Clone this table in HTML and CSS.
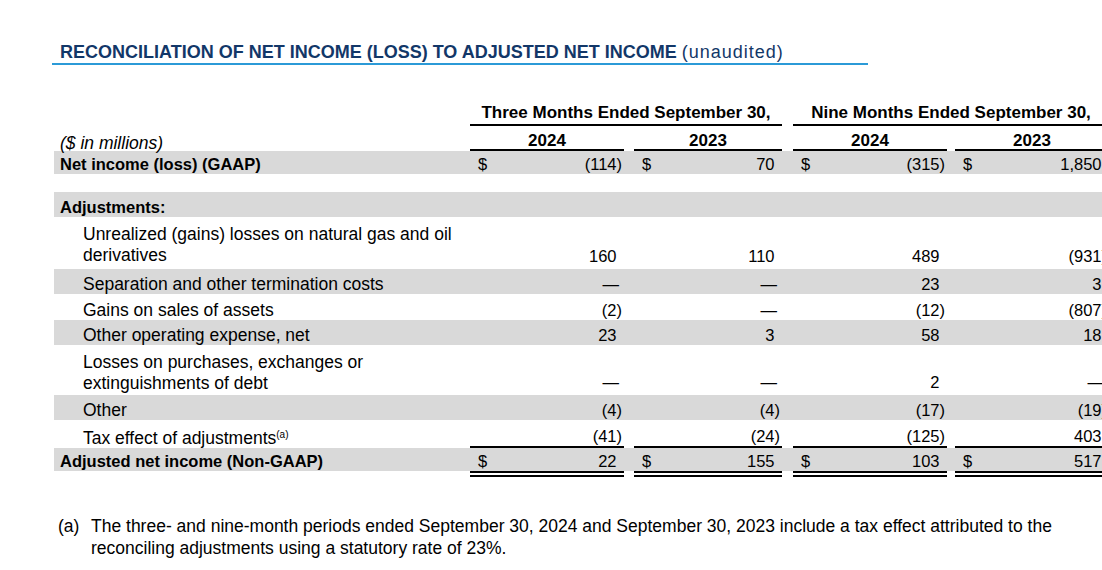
FILE: index.html
```html
<!DOCTYPE html>
<html lang="en">
<head>
<meta charset="utf-8">
<title>Reconciliation of Net Income (Loss) to Adjusted Net Income</title>
<link rel="stylesheet" href="styles.css">
</head>
<body>
<div class="page">
  <h1 class="title"><span class="title-main">RECONCILIATION OF NET INCOME (LOSS) TO ADJUSTED NET INCOME</span> <span class="title-sub">(unaudited)</span></h1>

  <table class="recon">
    <colgroup>
      <col class="c-label">
      <col class="c-val">
      <col class="c-sp1">
      <col class="c-val2">
      <col class="c-sp2">
      <col class="c-val">
      <col class="c-sp3">
      <col class="c-val4">
    </colgroup>
    <thead>
      <tr class="h1">
        <th></th>
        <th colspan="3" class="period">Three Months Ended September 30,</th>
        <th></th>
        <th colspan="3" class="period">Nine Months Ended September 30,</th>
      </tr>
      <tr class="h2">
        <th class="units">($ in millions)</th>
        <th class="yr">2024</th>
        <th></th>
        <th class="yr">2023</th>
        <th></th>
        <th class="yr">2024</th>
        <th></th>
        <th class="yr">2023</th>
      </tr>
    </thead>
    <tbody>
      <tr class="shade r23">
        <td class="lbl b">Net income (loss) (GAAP)</td>
        <td class="num"><div class="money"><span>$</span><span>(114)</span></div></td>
        <td></td>
        <td class="num"><div class="money"><span>$</span><span class="p">70</span></div></td>
        <td></td>
        <td class="num"><div class="money"><span>$</span><span>(315)</span></div></td>
        <td></td>
        <td class="num"><div class="money"><span>$</span><span class="p">1,850</span></div></td>
      </tr>
      <tr class="gap"><td colspan="8"></td></tr>
      <tr class="shade r25">
        <td class="lbl b">Adjustments:</td>
        <td></td><td></td><td></td><td></td><td></td><td></td><td></td>
      </tr>
      <tr class="two r52">
        <td class="lbl sub">Unrealized (gains) losses on natural gas and oil<br>derivatives</td>
        <td class="num"><span class="p">160</span></td>
        <td></td>
        <td class="num"><span class="p">110</span></td>
        <td></td>
        <td class="num"><span class="p">489</span></td>
        <td></td>
        <td class="num"><span>(931)</span></td>
      </tr>
      <tr class="shade r25">
        <td class="lbl sub">Separation and other termination costs</td>
        <td class="num"><span class="dash">—</span></td>
        <td></td>
        <td class="num"><span class="dash">—</span></td>
        <td></td>
        <td class="num"><span class="p">23</span></td>
        <td></td>
        <td class="num"><span class="p">3</span></td>
      </tr>
      <tr class="r26">
        <td class="lbl sub">Gains on sales of assets</td>
        <td class="num"><span>(2)</span></td>
        <td></td>
        <td class="num"><span class="dash">—</span></td>
        <td></td>
        <td class="num"><span>(12)</span></td>
        <td></td>
        <td class="num"><span>(807)</span></td>
      </tr>
      <tr class="shade r25">
        <td class="lbl sub">Other operating expense, net</td>
        <td class="num"><span class="p">23</span></td>
        <td></td>
        <td class="num"><span class="p">3</span></td>
        <td></td>
        <td class="num"><span class="p">58</span></td>
        <td></td>
        <td class="num"><span class="p">18</span></td>
      </tr>
      <tr class="two r50">
        <td class="lbl sub low">Losses on purchases, exchanges or<br>extinguishments of debt</td>
        <td class="num"><span class="dash">—</span></td>
        <td></td>
        <td class="num"><span class="dash">—</span></td>
        <td></td>
        <td class="num"><span class="p">2</span></td>
        <td></td>
        <td class="num"><span class="dash">—</span></td>
      </tr>
      <tr class="shade r25">
        <td class="lbl sub">Other</td>
        <td class="num"><span>(4)</span></td>
        <td></td>
        <td class="num"><span>(4)</span></td>
        <td></td>
        <td class="num"><span>(17)</span></td>
        <td></td>
        <td class="num"><span>(19)</span></td>
      </tr>
      <tr class="sub-total r28">
        <td class="lbl sub">Tax effect of adjustments<sup class="fn">(a)</sup></td>
        <td class="num"><span>(41)</span></td>
        <td></td>
        <td class="num"><span>(24)</span></td>
        <td></td>
        <td class="num"><span>(125)</span></td>
        <td></td>
        <td class="num"><span class="p">403</span></td>
      </tr>
      <tr class="shade total r29">
        <td class="lbl b">Adjusted net income (Non-GAAP)</td>
        <td class="num"><div class="money"><span>$</span><span class="p">22</span></div></td>
        <td></td>
        <td class="num"><div class="money"><span>$</span><span class="p">155</span></div></td>
        <td></td>
        <td class="num"><div class="money"><span>$</span><span class="p">103</span></div></td>
        <td></td>
        <td class="num"><div class="money"><span>$</span><span class="p">517</span></div></td>
      </tr>
    </tbody>
  </table>

  <div class="note">
    <span class="note-mark">(a)</span>
    <p class="note-text">The three- and nine-month periods ended September 30, 2024 and September 30, 2023 include a tax effect attributed to the reconciling adjustments using a statutory rate of 23%.</p>
  </div>
</div>
</body>
</html>
```

FILE: styles.css
```css
html, body {
  margin: 0;
  padding: 0;
  background: #ffffff;
  overflow: hidden;
}

body {
  font-family: "Liberation Sans", Arial, sans-serif;
  color: #000000;
}

.page {
  padding: 41px 0 0 52px;
  width: 1200px;
}

/* Title */
.title {
  margin: 0;
  width: 808px;
  padding-left: 8px;
  border-bottom: 2px solid #2b9ad7;
  font-size: 18px;
  line-height: 22px;
  font-weight: 700;
  color: #123768;
}

.title-sub {
  font-weight: 400;
  letter-spacing: 1px;
}

/* Table */
.recon {
  margin: 37px 0 0 2px;
  border-collapse: separate;
  border-spacing: 0;
  table-layout: fixed;
  width: 1055px;
}

.c-label { width: 416px; }
.c-val   { width: 154px; }
.c-val2  { width: 148px; }
.c-val4  { width: 154px; }
.c-sp1   { width: 10px; }
.c-sp2   { width: 11px; }
.c-sp3   { width: 8px; }

.recon th,
.recon td {
  padding: 0;
  vertical-align: bottom;
}

/* Header rows */
.recon th {
  font-size: 17px;
  font-weight: 700;
  text-align: center;
}

.recon .h1 th {
  height: 21px;
  line-height: 20px;
  padding-bottom: 1px;
}

.recon .h2 th {
  height: 23px;
  line-height: 16px;
}

.recon th.period,
.recon th.yr {
  border-bottom: 2px solid #000000;
}

.recon th.units {
  text-align: left;
  padding-left: 6px;
  font-style: italic;
  font-weight: 400;
  font-size: 17.5px;
}

/* Row heights */
.r23 { height: 23px; }
.r25 { height: 25px; }
.r26 { height: 26px; }
.r28 { height: 28px; }
.r29 { height: 29px; }
.r50 { height: 50px; }
.r52 { height: 52px; }
.gap { height: 18px; }

.shade td {
  background: #d9d9d9;
}

/* Labels */
.recon td.lbl {
  padding-left: 6px;
  font-size: 17.5px;
  line-height: 20px;
  white-space: nowrap;
}

.recon td.lbl.sub {
  padding-left: 29px;
}

.recon td.lbl.b {
  font-weight: 700;
  font-size: 16.5px;
}

.recon .two td {
  padding-bottom: 3px;
}

.recon .two td.lbl {
  line-height: 21px;
}

.recon .two td.lbl.low {
  padding-bottom: 1px;
}

.fn {
  font-size: 10px;
  line-height: 0;
  vertical-align: 6px;
}

/* Numbers */
.recon td.num {
  font-size: 16.5px;
  line-height: 20px;
  text-align: right;
  padding-left: 8px;
  padding-right: 2px;
  white-space: nowrap;
}

.money {
  display: flex;
  justify-content: space-between;
}

.p {
  padding-right: 5.5px;
}

.dash {
  padding-right: 3px;
}

.recon .sub-total td.num {
  border-bottom: 2px solid #000000;
}

.recon .total td {
  border-bottom: 6px double transparent;
  background-clip: padding-box;
}

.recon .total td.num {
  border-bottom-color: #000000;
}

/* Footnote */
.note {
  display: grid;
  grid-template-columns: 33px 990px;
  margin: 38px 0 0 6px;
  font-size: 17.5px;
  line-height: 22px;
}

.note-text {
  margin: 0;
}
```
